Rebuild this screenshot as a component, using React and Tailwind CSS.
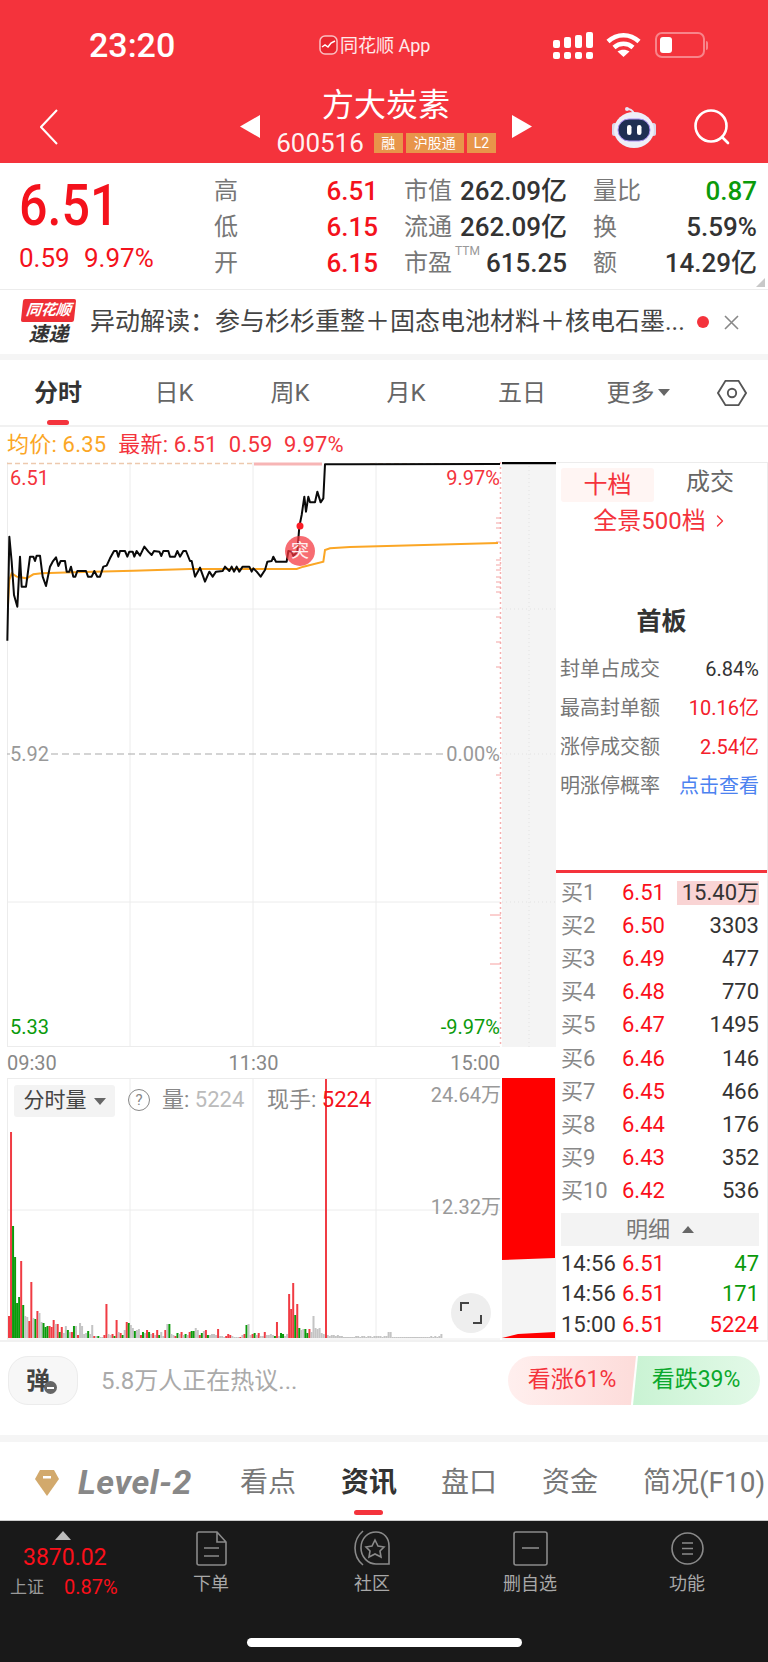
import { ChevronRight } from "lucide-react";

// traced from the chart, in crop coordinates (see toPoints)
const LINE_A = [22,557,28,245,35,320,42,420,52,455,60,305,65,395,78,395,90,305,100,305,105,318,110,302,120,302,128,365,138,393,150,335,158,320,168,307,175,333,182,318,195,318,200,350,208,350,213,335,220,365,226,365,232,348,258,348,264,365,275,365,283,348,292,365,300,365,310,335,320,332,330,310,342,288,350,288,355,305,360,288,375,288,382,305,388,290,398,290,403,305,410,288,420,302,433,275,445,290,455,300,462,288,478,290,484,303,490,288,505,288,510,305,525,305,532,288,540,305,550,288,558,288,570,318];
const LINE_B = [0,318,5,318,15,365,30,338,45,380,58,350,68,365,78,350,98,348,105,335,118,348,125,335,132,350,140,335,148,350,158,335,178,335,185,350,190,340,200,350,212,365,225,345,232,320,245,318,250,305,258,320,290,320,295,288,305,290,310,303,322,290,328,215,335,180,343,125,348,170,355,125,360,142,375,142,382,110,392,142,400,130,405,28,480,28];
const AVG_A = [24,450,28,375,35,355,50,365,80,370,100,358,125,355,220,352,400,347,570,342];
const AVG_B = [0,342,320,342,340,335,400,320,405,285,420,280,480,276];

const toPoints = (arr, ox) => {
  const out = [];
  for (let i = 0; i < arr.length; i += 2) out.push(`${ox + arr[i] / 3},${455 + arr[i + 1] / 3}`);
  return out;
};
const PRICE = [...toPoints(LINE_A, 0), ...toPoints(LINE_B, 190), "500,464"].join(" ");
const AVG = [...toPoints(AVG_A, 0), ...toPoints(AVG_B, 190), "498,543"].join(" ");

const TICKS = [518,523,528,542,560,565,570,577,582,587,592,617,642,667,717,775];

const BAR_DATA =
  "r22 r206 g112 g81 g35 g41 r77 g33 y22 y21 r17 r56 y20 g19 r27 y25 y16 g15 g11 g12 r12 r11 r18 y14 r14 g6 r11 y5 y12 g8 y6 r6 g12 y12 r3 y15 y12 y4 y5 g7 y4 y13 r2 y2 g2 y1 y1 r3 r34 y4 y3 r4 g2 r18 y6 r5 g3 y8 r16 g15 y13 y10 g7 y8 y9 r3 g6 y5 r8 g6 y4 r5 y3 r8 g3 y6 y2 r8 y14 g14 y4 y3 r2 g5 y4 r6 y3 g4 y3 r6 g7 g7 y10 y8 r3 g5 y7 r8 g3 y3 y4 y4 y3 r9 y2 y2 y1 r2 r4 r3 y2 y1 y1 y1 r1 y3 r4 g13 y14 y3 r4 g5 y3 r5 y2 y2 r6 y3 y3 y4 y3 g2 r16 y2 g5 g4 y2 y4 r44 r29 r55 g23 r34 g10 y8 y9 g9 g5 r9 y6 y22 y10 y9 y10 y5 y4 y3 y3 y2 y3 y3 y2 y3 y2 y2 y1 y1 y1 y1 y1 y1 y2 y2 y1 y2 y2 y1 y2 y2 y1 y2 y2 y2 y2 y1 y2 y2 y6 y6 y1 y1 y1 y1 y1 y1 y1 y1 y1 y1 y1 y1 y1 y1 y1 y1 y1 y1 y1 y2 y1 y2 y1 y2 y4";
const BAR_COLOR = { r: "#f03c44", g: "#0b9a0b", y: "#c4c4c4" };
const BARS = BAR_DATA.split(" ").map((t) => ({ color: BAR_COLOR[t[0]], h: Number(t.slice(1)) }));

const BUY = [
  ["买1", "6.51", "15.40万"],
  ["买2", "6.50", "3303"],
  ["买3", "6.49", "477"],
  ["买4", "6.48", "770"],
  ["买5", "6.47", "1495"],
  ["买6", "6.46", "146"],
  ["买7", "6.45", "466"],
  ["买8", "6.44", "176"],
  ["买9", "6.43", "352"],
  ["买10", "6.42", "536"],
];

function StatusIcons() {
  return (
    <div className="flex items-center">
      <svg width="40" height="27" viewBox="0 0 40 27" fill="#fff">
        <rect x="0" y="8" width="7" height="8" rx="2" />
        <rect x="11" y="5" width="7" height="11" rx="2" />
        <rect x="22" y="3" width="7" height="13" rx="2" />
        <rect x="33" y="0" width="7" height="16" rx="2" />
        <rect x="0" y="20" width="7" height="7" rx="2" />
        <rect x="11" y="20" width="7" height="7" rx="2" />
        <rect x="22" y="20" width="7" height="7" rx="2" />
        <rect x="33" y="20" width="7" height="7" rx="2" />
      </svg>
      <svg className="ml-[13px]" width="35" height="26" viewBox="0 0 35 26" fill="none" stroke="#fff" strokeWidth="4.5">
        <path d="M2 9.5C11 1 24 1 33 9.5" />
        <path d="M8 15.5C13.5 10.5 21.5 10.5 27 15.5" />
        <path d="M17.5 25L11.5 19.5C15 17 20 17 23.5 19.5Z" fill="#fff" stroke="none" />
      </svg>
      <div className="ml-[14px] flex items-center">
        <div className="h-[26px] w-[50px] rounded-[7px] border-2 border-white/40 p-[3px]">
          <div className="h-full w-[12px] rounded-[3px] bg-white" />
        </div>
        <div className="ml-[1px] h-[9px] w-[2px] rounded-r-full bg-white/40" />
      </div>
    </div>
  );
}

function RobotIcon() {
  return (
    <svg width="44" height="42" viewBox="0 0 44 42">
      <path d="M22 8C21 4 17 3 15 3" fill="none" stroke="#e8e4f5" strokeWidth="2" />
      <circle cx="15" cy="3" r="2" fill="#e8e4f5" />
      <rect x="0" y="17" width="5" height="13" rx="2.5" fill="#d8d8ea" />
      <rect x="39" y="17" width="5" height="13" rx="2.5" fill="#d8d8ea" />
      <ellipse cx="22" cy="24" rx="20" ry="18" fill="#eeeef8" />
      <rect x="6" y="13" width="32" height="22" rx="11" fill="#1f2f52" stroke="#a78cf0" strokeWidth="1" />
      <rect x="15" y="19" width="4.5" height="10" rx="2.2" fill="#fff" />
      <rect x="25" y="19" width="4.5" height="10" rx="2.2" fill="#fff" />
    </svg>
  );
}

function Header() {
  return (
    <header className="h-[163px] bg-[#f4333c] text-white">
      <div className="flex h-[90px] items-center">
        <div className="ml-[89px] w-[230px] text-[34px] font-medium">23:20</div>
        <div className="flex w-[234px] items-center text-[18px] text-white/90">
          <svg width="19" height="20" viewBox="0 0 19 20" fill="none">
            <rect x="1" y="1" width="17" height="18" rx="5" fill="#e8262f" stroke="#fff" strokeOpacity=".7" strokeWidth="1.5" />
            <path d="M3 12l3-2 3 2 3-4 4-2" stroke="#fff" strokeWidth="1.5" />
          </svg>
          <span className="ml-[2px]">同花顺 App</span>
        </div>
        <StatusIcons />
      </div>
      <div className="flex h-[73px] items-center">
        <svg className="ml-[40px]" width="18" height="36" viewBox="0 0 18 36" fill="none" stroke="#fff" strokeWidth="2">
          <path d="M17 1L1 18l16 17" />
        </svg>
        <svg className="ml-[182px]" width="20" height="23" viewBox="0 0 20 23" fill="#fff">
          <path d="M20 0v23L0 11.5z" />
        </svg>
        <div className="flex w-[252px] flex-col items-center self-start">
          <div className="text-[32px] leading-[30px]">方大炭素</div>
          <div className="mt-[11px] flex items-center">
            <span className="text-[26px] leading-[24px] text-white/95">600516</span>
            <span className="ml-[10px] flex h-[20px] w-[29px] items-center justify-center bg-[#e8954a] text-[14px]">融</span>
            <span className="ml-[3px] flex h-[20px] w-[58px] items-center justify-center bg-[#e8954a] text-[14px]">沪股通</span>
            <span className="ml-[3px] flex h-[20px] w-[29px] items-center justify-center bg-[#e8954a] text-[14px]">L2</span>
          </div>
        </div>
        <svg width="20" height="23" viewBox="0 0 20 23" fill="#fff">
          <path d="M0 0v23l20-11.5z" />
        </svg>
        <div className="ml-[80px]">
          <RobotIcon />
        </div>
        <svg className="ml-[37px]" width="38" height="36" viewBox="0 0 38 36" fill="none" stroke="#fff" strokeWidth="2.6">
          <circle cx="18" cy="17" r="15.5" />
          <path d="M29 28l6 6" strokeLinecap="round" />
        </svg>
      </div>
    </header>
  );
}

function QuoteCell({ label, value, valueClass = "text-[#333]", width, note }) {
  return (
    <div className={`flex h-[36px] items-center justify-between ${width}`}>
      <span className="text-[24px] text-[#777]">
        {label}
        {note}
      </span>
      <span className={`text-[26px] font-medium ${valueClass}`}>{value}</span>
    </div>
  );
}

function Quote() {
  const red = "text-[#f4121c]";
  return (
    <section className="relative flex h-[127px] border-b border-[#ececec] pt-[10px]">
      <div className="w-[214px] pl-[19px]">
        <div className="mt-[2px] origin-left scale-x-[0.88] text-[57px] font-medium leading-[62px] text-[#f4121c]">6.51</div>
        <div className="mt-[3px] flex text-[26px] leading-[36px] text-[#f4121c]">
          <span className="w-[65px]">0.59</span>
          <span>9.97%</span>
        </div>
      </div>
      <div className="flex flex-col">
        <div className="flex">
          <QuoteCell label="高" value="6.51" valueClass={red} width="w-[164px]" />
          <div className="w-[26px]" />
          <QuoteCell label="市值" value="262.09亿" width="w-[163px]" />
          <div className="w-[26px]" />
          <QuoteCell label="量比" value="0.87" valueClass="text-[#0b9a0b]" width="w-[164px]" />
        </div>
        <div className="flex">
          <QuoteCell label="低" value="6.15" valueClass={red} width="w-[164px]" />
          <div className="w-[26px]" />
          <QuoteCell label="流通" value="262.09亿" width="w-[163px]" />
          <div className="w-[26px]" />
          <QuoteCell label="换" value="5.59%" width="w-[164px]" />
        </div>
        <div className="flex">
          <QuoteCell label="开" value="6.15" valueClass={red} width="w-[164px]" />
          <div className="w-[26px]" />
          <QuoteCell
            label="市盈"
            value="615.25"
            width="w-[163px]"
            note={<sup className="ml-[3px] align-[10px] text-[12px] text-[#999]">TTM</sup>}
          />
          <div className="w-[26px]" />
          <QuoteCell label="额" value="14.29亿" width="w-[164px]" />
        </div>
      </div>
      <div className="absolute bottom-[2px] right-[3px] h-0 w-0 border-b-[9px] border-l-[9px] border-b-[#c8c8c8] border-l-transparent" />
    </section>
  );
}

function Ticker() {
  return (
    <section className="flex h-[70px] items-center border-b-[6px] border-[#f5f5f5]">
      <div className="ml-[22px] flex w-[53px] flex-col items-center">
        <div className="flex h-[23px] w-[53px] -skew-x-6 items-center justify-center rounded-[2px] bg-[#ee2f36] text-[15px] font-bold italic leading-none text-white">
          同花顺
        </div>
        <div className="text-[20px] font-bold italic leading-[24px] text-[#333]">速递</div>
      </div>
      <div className="ml-[15px] w-[596px] whitespace-nowrap text-[25px] text-[#444]">
        异动解读：参与杉杉重整＋固态电池材料＋核电石墨...
      </div>
      <div className="ml-[11px] h-[12px] w-[12px] rounded-full bg-[#f4333c]" />
      <svg className="ml-[15px]" width="15" height="15" viewBox="0 0 15 15" stroke="#888" strokeWidth="1.6">
        <path d="M1 1l13 13M14 1L1 14" />
      </svg>
    </section>
  );
}

function ChartTabs() {
  return (
    <nav className="flex h-[67px] items-center border-b-2 border-[#f1f1f1] text-[24px] text-[#666]">
      <div className="relative flex h-full w-[116px] items-center justify-center font-bold text-[#333]">
        分时
        <div className="absolute bottom-0 left-[47px] h-[5px] w-[22px] rounded-full bg-[#f4333c]" />
      </div>
      <div className="w-[116px] text-center">日K</div>
      <div className="w-[116px] text-center">周K</div>
      <div className="w-[116px] text-center">月K</div>
      <div className="w-[116px] text-center">五日</div>
      <div className="flex w-[116px] items-center justify-center">
        更多
        <span className="ml-[3px] h-0 w-0 border-x-[6px] border-t-[7px] border-x-transparent border-t-[#666]" />
      </div>
      <svg className="ml-[21px]" width="30" height="28" viewBox="0 0 32 30" fill="none" stroke="#555" strokeWidth="2">
        <path d="M9 2h14l8 13-8 13H9L1 15z" />
        <circle cx="16" cy="15" r="4.5" />
      </svg>
    </nav>
  );
}

function PriceChart() {
  return (
    <div className="relative h-[585px] w-[556px]">
      <svg width="556" height="585" viewBox="0 462 556 585" className="block">
        <rect x="502" y="462" width="54" height="585" fill="#f4f4f4" />
        <g stroke="#ececec" strokeWidth="1">
          <path d="M7.5 462v585M130 462v585M253 462v585M376 462v585M7 609h493M7 902h493M7 1046.5h493" />
        </g>
        <path d="M502 609h54M502 754h54M502 902h54M529 462v585" stroke="#e2e2e2" strokeDasharray="1 3" />
        <path d="M7 463.5h247" stroke="#edc9ae" strokeWidth="1.5" strokeDasharray="5 3" />
        <path d="M254 464h68" stroke="#f7b5b5" strokeWidth="3" />
        <path d="M370 463.5h130" stroke="#edc9ae" strokeWidth="1" strokeDasharray="5 3" />
        <path d="M7 754h493" stroke="#aaa" strokeWidth="1.2" strokeDasharray="7 4" />
        <path d="M500.5 462v585" stroke="#f5b0b0" strokeWidth="1.5" strokeDasharray="2 3" />
        {TICKS.map((y) => (
          <path key={y} d={`M496 ${y}h5`} stroke="#f3a3a3" />
        ))}
        <path d="M490 915h11M490 964h11" stroke="#f7a0a0" />
        <path d="M502 463h54" stroke="#000" strokeWidth="2.5" />
        <polyline points={AVG} fill="none" stroke="#fba625" strokeWidth="2" />
        <polyline points={PRICE} fill="none" stroke="#0a0a0a" strokeWidth="2" strokeLinejoin="round" />
        <circle cx="300" cy="526" r="3.5" fill="#fb1c26" />
        <circle cx="300" cy="551" r="15" fill="#f4333c" fillOpacity=".72" />
      </svg>
      <span className="absolute left-[291px] top-[79px] text-[18px] leading-[20px] text-white/90">突</span>
      <span className="absolute left-[10px] top-[4px] text-[20px] leading-[24px] text-[#f4333c]">6.51</span>
      <span className="absolute right-[56px] top-[4px] text-[20px] leading-[24px] text-[#f4333c]">9.97%</span>
      <span className="absolute left-[10px] top-[280px] bg-white text-[20px] leading-[24px] text-[#999]">5.92</span>
      <span className="absolute right-[56px] top-[280px] bg-white text-[20px] leading-[24px] text-[#999]">0.00%</span>
      <span className="absolute bottom-[8px] left-[10px] text-[20px] leading-[24px] text-[#0b9a0b]">5.33</span>
      <span className="absolute bottom-[8px] right-[56px] text-[20px] leading-[24px] text-[#0b9a0b]">-9.97%</span>
    </div>
  );
}

function VolumeChart() {
  return (
    <div className="relative h-[262px] w-[556px]">
      <svg width="556" height="262" viewBox="0 1078 556 262" className="block">
        <rect x="502" y="1078" width="54" height="262" fill="#f4f4f4" />
        <path d="M7.5 1078.5h493M7.5 1078v261M130 1078v261M253 1078v261M376 1078v261M7 1210h493M7 1339h493" stroke="#ececec" />
        {BARS.map((b, i) => (
          <rect key={i} x={8 + i * 2.03} y={1338 - b.h} width="2" height={b.h} fill={b.color} />
        ))}
        <rect x="325" y="1079" width="2" height="259" fill="#f03c44" />
        <path d="M502 1078h53v180l-53 2z" fill="#ff0000" />
        <path d="M502 1338l16-4 37-2v6z" fill="#ff0000" />
      </svg>
      <div className="absolute left-[14px] top-[7px] flex h-[32px] w-[101px] items-center justify-center rounded-[3px] bg-[#f3f3f3] text-[21px] text-[#444]">
        分时量
        <span className="ml-[7px] h-0 w-0 border-x-[6px] border-t-[7px] border-x-transparent border-t-[#666]" />
      </div>
      <div className="absolute left-[128px] top-[11px] flex h-[22px] w-[22px] items-center justify-center rounded-full border border-[#888] text-[15px] leading-none text-[#888]">
        ?
      </div>
      <span className="absolute left-[162px] top-[8px] text-[22px] leading-[28px] text-[#888]">
        量: <span className="text-[#bbb]">5224</span>
      </span>
      <span className="absolute left-[267px] top-[8px] text-[22px] leading-[28px] text-[#888]">
        现手: <span className="text-[#f4121c]">5224</span>
      </span>
      <span className="absolute right-[55px] top-[3px] text-[20px] leading-[28px] text-[#999]">24.64万</span>
      <span className="absolute right-[55px] top-[115px] text-[20px] leading-[28px] text-[#999]">12.32万</span>
      <div className="absolute left-[451px] top-[215px] flex h-[40px] w-[40px] items-center justify-center rounded-full bg-[#eeeeee]">
        <svg width="22" height="22" viewBox="0 0 22 22" fill="none" stroke="#444" strokeWidth="2">
          <path d="M1 9V1h8M21 13v8h-8" />
        </svg>
      </div>
    </div>
  );
}

function SidePanel() {
  return (
    <aside className="flex h-[878px] w-[212px] flex-col border-r border-t border-[#ececec] text-[#777]">
      <div className="flex h-[39px] items-end pl-[5px]">
        <div className="flex h-[34px] w-[93px] items-center justify-center rounded-[3px] bg-[#fff5f3] text-[24px] text-[#f4333c]">十档</div>
        <div className="w-[112px] pb-[2px] text-center text-[24px] text-[#666]">成交</div>
      </div>
      <div className="flex h-[38px] items-center justify-center text-[24px] text-[#f4333c]">
        全景500档
        <ChevronRight className="ml-[4px]" size={20} strokeWidth={1.6} />
      </div>
      <div className="mt-[64px] text-center text-[25px] font-bold leading-[36px] text-[#333]">首板</div>
      <div className="mt-[9px] flex flex-col pl-[4px] pr-[8px] text-[20px]">
        <div className="flex h-[39px] items-center justify-between">
          <span>封单占成交</span>
          <span className="text-[#333]">6.84%</span>
        </div>
        <div className="flex h-[39px] items-center justify-between">
          <span>最高封单额</span>
          <span className="text-[#f4202b]">10.16亿</span>
        </div>
        <div className="flex h-[39px] items-center justify-between">
          <span>涨停成交额</span>
          <span className="text-[#f4202b]">2.54亿</span>
        </div>
        <div className="flex h-[39px] items-center justify-between">
          <span>明涨停概率</span>
          <span className="text-[#4c82f0]">点击查看</span>
        </div>
      </div>
      <div className="mt-[65px] h-[3px] bg-[#f4333c]" />
      <div className="mt-[3px] flex flex-col pl-[5px] pr-[8px] text-[22px]">
        {BUY.map(([label, price, vol], i) => (
          <div key={label} className="flex h-[33.1px] items-center">
            <span className="w-[61px] text-[#888]">{label}</span>
            <span className="text-[#fb0f1a]">{price}</span>
            <span className={`ml-auto ${i === 0 ? "bg-[#f9d4d4] pl-[5px] leading-[24px]" : ""} text-[#333]`}>{vol}</span>
          </div>
        ))}
      </div>
      <div className="ml-[5px] mr-[8px] mt-[6px] flex h-[33px] items-center justify-center bg-[#f3f3f3] text-[22px] text-[#777]">
        明细
        <span className="ml-[12px] h-0 w-0 border-x-[6px] border-b-[7px] border-x-transparent border-b-[#666]" />
      </div>
      <div className="mt-[2px] flex flex-col pl-[5px] pr-[8px] text-[22px]">
        {[
          ["14:56", "47", "text-[#0b9a0b]"],
          ["14:56", "171", "text-[#0b9a0b]"],
          ["15:00", "5224", "text-[#fb0f1a]"],
        ].map(([t, v, c], i) => (
          <div key={i} className="flex h-[30.5px] items-center">
            <span className="w-[61px] text-[#333]">{t}</span>
            <span className="text-[#fb0f1a]">6.51</span>
            <span className={`ml-auto ${c}`}>{v}</span>
          </div>
        ))}
      </div>
    </aside>
  );
}

function CommentBar() {
  return (
    <section className="flex h-[95px] items-start border-t-2 border-[#f1f1f1] pt-[14px]">
      <div className="relative ml-[8px] flex h-[49px] w-[70px] items-center justify-center rounded-[20px] border border-[#ececec] bg-[#f7f7f7] text-[24px] font-bold text-[#444]">
        <span className="-ml-[10px]">弹</span>
        <div className="absolute bottom-[10px] right-[20px] flex h-[13px] w-[13px] items-center justify-center rounded-full bg-[#666]">
          <div className="h-[2px] w-[7px] bg-white" />
        </div>
      </div>
      <div className="ml-[23px] flex h-[49px] w-[407px] items-center text-[24px] text-[#aaa]">5.8万人正在热议...</div>
      <div className="flex h-[49px] w-[128px] items-center justify-center rounded-l-[25px] bg-gradient-to-r from-[#ffefee] to-[#fddcda] text-[23px] text-[#f4333c] [clip-path:polygon(0_0,100%_0,96%_100%,0_100%)]">
        看涨61%
      </div>
      <div className="-ml-[4px] flex h-[49px] w-[128px] items-center justify-center rounded-r-[25px] bg-gradient-to-r from-[#c9f3d3] to-[#e3f9e8] text-[23px] text-[#0ba82d] [clip-path:polygon(4.7%_0,100%_0,100%_100%,0.8%_100%)]">
        看跌39%
      </div>
    </section>
  );
}

function InfoTabs() {
  return (
    <nav className="flex h-[79px] items-center border-b border-[#ccc] bg-white pt-[3px] text-[28px] text-[#777]">
      <svg className="ml-[35px]" width="24" height="27" viewBox="0 0 24 27">
        <path d="M5 1h14l5 9-12 17L0 10z" fill="#d2a96c" />
        <rect x="8" y="7" width="8" height="2.5" fill="#fff" />
      </svg>
      <span className="ml-[19px] w-[118px] whitespace-nowrap text-[34px] font-bold italic tracking-[0.5px] text-[#888]">Level-2</span>
      <span className="ml-[44px] w-[56px]">看点</span>
      <div className="relative ml-[45px] flex h-full w-[56px] items-center font-bold text-[#333]">
        资讯
        <div className="absolute bottom-[5px] left-[13px] h-[5px] w-[29px] rounded-full bg-[#f4333c]" />
      </div>
      <span className="ml-[44px] w-[56px]">盘口</span>
      <span className="ml-[45px] w-[56px]">资金</span>
      <span className="ml-[45px] whitespace-nowrap">简况(F10)</span>
    </nav>
  );
}

function ToolItem({ icon, label, width }) {
  return (
    <div className={`flex flex-col items-center pt-[9px] ${width}`}>
      <div className="flex h-[36px] items-center">{icon}</div>
      <div className="mt-[5px] text-[18px] leading-[26px] text-[#a8a8a8]">{label}</div>
    </div>
  );
}

function Toolbar() {
  return (
    <footer className="flex h-[141px] flex-col bg-[#191919]">
      <div className="flex">
        <div className="flex w-[132px] flex-col pt-[10px]">
          <div className="ml-[55px] h-0 w-0 border-x-[8px] border-b-[9px] border-x-transparent border-b-[#bbb]" />
          <div className="ml-[23px] mt-[3px] text-[23px] leading-[30px] text-[#fb0f1a]">3870.02</div>
          <div className="mt-[1px] flex items-center leading-[26px]">
            <span className="ml-[10px] text-[17px] text-[#999]">上证</span>
            <span className="ml-[20px] text-[20px] text-[#fb0f1a]">0.87%</span>
          </div>
        </div>
        <ToolItem
          width="w-[158px]"
          label="下单"
          icon={
            <svg width="31" height="35" viewBox="0 0 31 35" fill="none" stroke="#8a8a8a" strokeWidth="1.6">
              <path d="M3 1h18l9 10v21a2 2 0 0 1-2 2H3a2 2 0 0 1-2-2V3a2 2 0 0 1 2-2zM21 1v10h9M8 17h15M8 25h15" />
            </svg>
          }
        />
        <ToolItem
          width="w-[164px]"
          label="社区"
          icon={
            <svg width="37" height="36" viewBox="0 0 37 36" fill="none" stroke="#8a8a8a" strokeWidth="1.6">
              <path d="M9 1C3 6 1 12 1 18c0 7 3 13 8 17" />
              <path d="M22 2C14 2 7 8 7 18c0 9 7 16 15 16h13V16C35 8 30 2 22 2z" />
              <path d="M21 10l3 6 6 1-4 4 1 6-6-3-6 3 1-6-4-4 6-1z" />
            </svg>
          }
        />
        <ToolItem
          width="w-[152px]"
          label="删自选"
          icon={
            <svg width="35" height="35" viewBox="0 0 35 35" fill="none" stroke="#8a8a8a" strokeWidth="1.6">
              <rect x="1" y="1" width="33" height="33" rx="2" />
              <path d="M9 17h17" />
            </svg>
          }
        />
        <ToolItem
          width="w-[162px]"
          label="功能"
          icon={
            <svg width="33" height="33" viewBox="0 0 33 33" fill="none" stroke="#8a8a8a" strokeWidth="1.6">
              <circle cx="16.5" cy="16.5" r="15.5" />
              <path d="M11 11h11M11 16.5h11M11 22h11" />
            </svg>
          }
        />
      </div>
      <div className="mx-auto mb-[15px] mt-auto h-[9px] w-[275px] rounded-full bg-white" />
    </footer>
  );
}

export default function App() {
  return (
    <div className="h-[1662px] w-[768px] overflow-hidden bg-white font-['Roboto','Noto_Sans_CJK_SC',sans-serif]">
      <Header />
      <Quote />
      <Ticker />
      <ChartTabs />
      <div className="flex h-[35px] items-center whitespace-pre pl-[7px] text-[22px] tracking-[0.2px]">
        <span className="text-[#fba625]">均价: 6.35</span>
        <span className="ml-[12px] text-[#f4333c]">最新: 6.51  0.59  9.97%</span>
      </div>
      <div className="flex">
        <div className="flex w-[556px] flex-col">
          <PriceChart />
          <div className="flex h-[31px] w-[500px] items-center justify-between pl-[7px] text-[20px] text-[#888]">
            <span>09:30</span>
            <span>11:30</span>
            <span>15:00</span>
          </div>
          <VolumeChart />
        </div>
        <SidePanel />
      </div>
      <CommentBar />
      <div className="h-[7px] bg-[#f5f5f5]" />
      <InfoTabs />
      <Toolbar />
    </div>
  );
}
